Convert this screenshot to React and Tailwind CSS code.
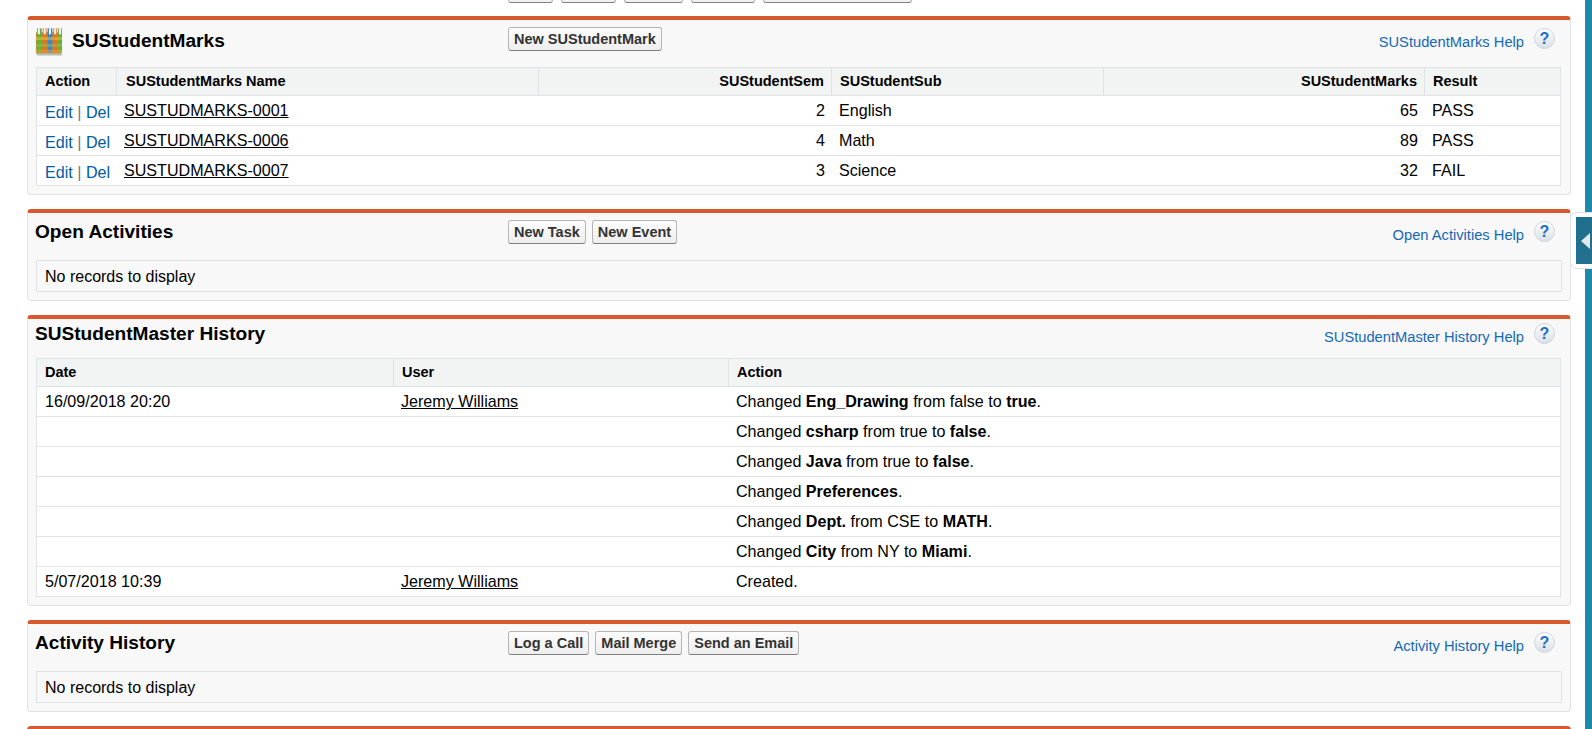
import React from 'react';

const marks = [
  { name: 'SUSTUDMARKS-0001', sem: 2, sub: 'English', marks: 65, result: 'PASS' },
  { name: 'SUSTUDMARKS-0006', sem: 4, sub: 'Math', marks: 89, result: 'PASS' },
  { name: 'SUSTUDMARKS-0007', sem: 3, sub: 'Science', marks: 32, result: 'FAIL' },
];

const history = [
  { date: '16/09/2018 20:20', user: 'Jeremy Williams', action: <>Changed <b>Eng_Drawing</b> from false to <b>true</b>.</> },
  { action: <>Changed <b>csharp</b> from true to <b>false</b>.</> },
  { action: <>Changed <b>Java</b> from true to <b>false</b>.</> },
  { action: <>Changed <b>Preferences</b>.</> },
  { action: <>Changed <b>Dept.</b> from CSE to <b>MATH</b>.</> },
  { action: <>Changed <b>City</b> from NY to <b>Miami</b>.</> },
  { date: '5/07/2018 10:39', user: 'Jeremy Williams', action: <>Created.</> },
];

const Btn = ({ children }) => (
  <button className="h-[24px] px-[5px] rounded-[3px] border border-[#b5b5b5] border-b-[#7f7f7f] bg-gradient-to-b from-[#fdfdfd] to-[#eeeeee] text-[14.5px] font-bold text-[#333] leading-none whitespace-nowrap">
    {children}
  </button>
);

const HelpIcon = () => (
  <span className="w-[21px] h-[21px] rounded-full border border-[#cfd4d9] bg-gradient-to-b from-[#ffffff] to-[#d9e0e6] flex items-center justify-center text-[16px] font-bold text-[#1c6fc4] leading-none">
    ?
  </span>
);

const Panel = ({ title, help, buttons, icon, compact, children }) => (
  <section className="rounded-[4px] border border-[#e0e3e5] border-t-4 border-t-[#d9592f] bg-[#f8f8f8] px-[8px] pb-[8px]">
    <div className={`flex items-start ${compact ? 'h-[39px]' : 'h-[47px]'}`}>
      <div className={`w-[473px] flex items-center shrink-0 -ml-[1px] ${icon ? 'pt-[6px]' : compact ? 'pt-0' : 'pt-[4px]'}`}>
        {icon}
        <h3 className="text-[19.1px] font-bold text-black leading-[30px] whitespace-nowrap">{title}</h3>
      </div>
      <div className="flex gap-[6px] pt-[7px]">{buttons}</div>
      <div className={`ml-auto flex items-start gap-[10px] pr-[7px] ${compact ? 'pt-[4px]' : 'pt-[8px]'}`}>
        <a className="text-[14.7px] text-[#1468b6] leading-[28px] whitespace-nowrap">{help}</a>
        <HelpIcon />
      </div>
    </div>
    {children}
  </section>
);

const Empty = () => (
  <div className="h-[32px] border border-[#e0e3e5] px-[8px] text-[16px] leading-[32px] text-black">No records to display</div>
);

const Th = ({ className = '', children }) => (
  <th className={`h-[28px] pt-[1px] pl-[8px] pr-[7px] text-[14.5px] font-bold text-black bg-[#f2f3f3] border-b border-l border-[#e0e3e5] first:border-l-0 ${className}`}>
    {children}
  </th>
);

const Td = ({ className = '', children }) => (
  <td className={`h-[30px] pl-[8px] pr-[6px] text-[16.1px] text-black border-b border-[#e3e3e3] ${className}`}>{children}</td>
);

const MarksIcon = () => (
  <svg width="29" height="30" viewBox="0 0 30 30" className="shrink-0 -ml-[1px] mr-[9px]">
    <rect x="2" y="6" width="26" height="22" fill="#b98f2e" />
    <rect x="3" y="2" width="5" height="25" fill="#5fb33a" />
    <rect x="9" y="2" width="4" height="25" fill="#e8701f" />
    <rect x="14" y="2" width="5" height="25" fill="#3f83cf" />
    <rect x="20" y="2" width="4" height="25" fill="#e8701f" />
    <rect x="25" y="2" width="4" height="25" fill="#5fb33a" />
    <path d="M5 2v6M11 2v6M16.500 2v6M22 2v6M27 2v6" stroke="#fff" strokeWidth="2" />
    <rect x="2" y="11" width="27" height="3" fill="#e6c23c" opacity="0.55" />
    <rect x="2" y="18" width="27" height="3" fill="#8fc24f" opacity="0.55" />
    <rect x="2" y="24" width="27" height="3" fill="#e9a13a" opacity="0.55" />
    <rect x="3" y="28" width="26" height="2" fill="#8f8f8f" opacity="0.6" />
  </svg>
);

export default function App() {
  return (
    <div className="relative h-[729px] overflow-hidden bg-white flex font-['Liberation_Sans',Arial,sans-serif]">
      <main className="w-[1544px] ml-[27px] shrink-0">
        {/* cut off buttons of the section above */}
        <div className="h-[3px] overflow-hidden flex items-end gap-[8px] pl-[481px] mb-[13px]">
          {[45, 55, 59, 64, 149].map((w) => (
            <span key={w} style={{ width: w }} className="h-[20px] shrink-0 rounded-[3px] border border-[#b5b5b5] border-b-[#7f7f7f] bg-[#f2f2f2]" />
          ))}
        </div>

        <div className="flex flex-col gap-[14px]">
          <Panel title="SUStudentMarks" help="SUStudentMarks Help" icon={<MarksIcon />} buttons={<Btn>New SUStudentMark</Btn>}>
            <table className="w-[1525px] table-fixed border-separate border-spacing-0 bg-white border border-[#e0e3e5] border-b-0">
              <colgroup>
                <col className="w-[79px]" />
                <col className="w-[422px]" />
                <col className="w-[293px]" />
                <col className="w-[272px]" />
                <col className="w-[321px]" />
                <col />
              </colgroup>
              <thead>
                <tr>
                  <Th className="text-left">Action</Th>
                  <Th className="text-left !pl-[9px]">SUStudentMarks Name</Th>
                  <Th className="text-right">SUStudentSem</Th>
                  <Th className="text-left">SUStudentSub</Th>
                  <Th className="text-right">SUStudentMarks</Th>
                  <Th className="text-left">Result</Th>
                </tr>
              </thead>
              <tbody>
                {marks.map((m) => (
                  <tr key={m.name}>
                    <Td className="whitespace-nowrap">
                      <span className="relative top-[2px]">
                        <a className="text-[#015ba7]">Edit</a> <span className="text-[#6d7b8a]">|</span> <a className="text-[#015ba7]">Del</a>
                      </span>
                    </Td>
                    <Td><a className="underline">{m.name}</a></Td>
                    <Td className="text-right">{m.sem}</Td>
                    <Td>{m.sub}</Td>
                    <Td className="text-right">{m.marks}</Td>
                    <Td>{m.result}</Td>
                  </tr>
                ))}
              </tbody>
            </table>
          </Panel>

          <Panel title="Open Activities" help="Open Activities Help" buttons={<><Btn>New Task</Btn><Btn>New Event</Btn></>}>
            <Empty />
          </Panel>

          <Panel title="SUStudentMaster History" help="SUStudentMaster History Help" compact>
            <table className="w-[1525px] table-fixed border-separate border-spacing-0 bg-white border border-[#e0e3e5] border-b-0">
              <colgroup>
                <col className="w-[356px]" />
                <col className="w-[335px]" />
                <col />
              </colgroup>
              <thead>
                <tr>
                  <Th className="text-left">Date</Th>
                  <Th className="text-left">User</Th>
                  <Th className="text-left">Action</Th>
                </tr>
              </thead>
              <tbody>
                {history.map((h, i) => (
                  <tr key={i}>
                    <Td>{h.date}</Td>
                    <Td>{h.user && <a className="underline">{h.user}</a>}</Td>
                    <Td>{h.action}</Td>
                  </tr>
                ))}
              </tbody>
            </table>
          </Panel>

          <Panel title="Activity History" help="Activity History Help" buttons={<><Btn>Log a Call</Btn><Btn>Mail Merge</Btn><Btn>Send an Email</Btn></>}>
            <Empty />
          </Panel>

          <div className="h-[20px] rounded-t-[4px] border-t-4 border-t-[#d9592f] bg-[#f8f8f8]" />
        </div>
      </main>

      <div className="ml-auto w-[7px] bg-[#1a8bad]" />

      {/* sidebar collapse tab */}
      <div className="absolute left-[1570px] top-[212px] w-[22px] h-[57px] bg-white rounded-l-[7px] border border-r-0 border-[#dfe3e6] pl-[5px] py-[4px]">
        <div className="h-full bg-gradient-to-b from-[#1f6f8c] to-[#24708f] flex items-center pl-[5px]">
          <span className="w-0 h-0 border-y-[8px] border-y-transparent border-r-[9px] border-r-[#e4e9ec]" />
        </div>
      </div>
    </div>
  );
}
